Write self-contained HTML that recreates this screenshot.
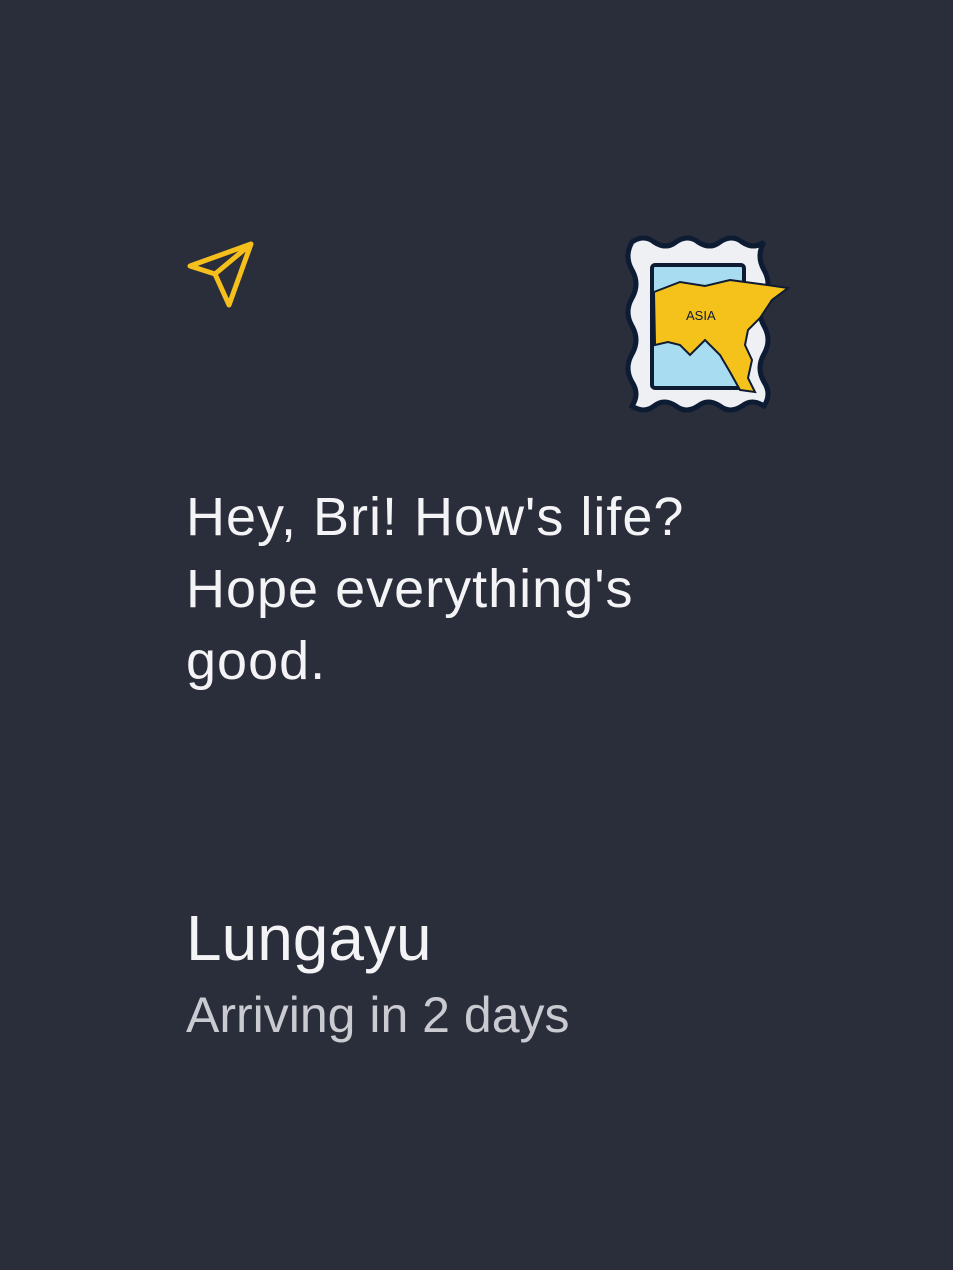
<!DOCTYPE html>
<html><head><style>
body{margin:0;width:953px;height:1270px;background:#2a2d3a;overflow:hidden;position:relative;font-family:"Liberation Sans",sans-serif}
.t{position:absolute;left:186px;color:#f4f4f6;white-space:nowrap}
</style></head><body>
<svg style="position:absolute;left:0;top:0" width="953" height="1270">
<path d="M190 266 L251 244 L229 305 L215 274 Z M251 244 L215 274" fill="none" stroke="#f5bf1c" stroke-width="5" stroke-linejoin="round" stroke-linecap="round"/>
<g>
<path d="M632 242 q12 -8 22 0 q12 8 22 0 q12 -8 22 0 q12 8 22 0 q12 -8 22 0 q12 8 22 0 l0 0 q-8 14 0 28 q8 14 0 28 q-8 14 0 28 q8 14 0 28 q-8 14 0 28 q8 12 0 24 q-12 -8 -22 0 q-12 8 -22 0 q-12 -8 -22 0 q-12 8 -22 0 q-12 -8 -22 0 q-10 8 -22 0 q8 -12 0 -24 q-8 -14 0 -28 q8 -14 0 -28 q-8 -14 0 -28 q8 -14 0 -28 q-8 -14 0 -28 Z" fill="#eef0f4" stroke="#0d1b33" stroke-width="5"/>
<rect x="652" y="265" width="92" height="123" rx="3" fill="#a8dcf0" stroke="#0d1b33" stroke-width="4"/>
<path d="M654 292 L680 282 L705 286 L730 280 L760 284 L788 288 L772 300 L760 318 L748 330 L745 345 L752 360 L748 378 L755 392 L740 390 L730 372 L720 355 L705 340 L690 355 L680 345 L668 342 L655 345 Z" fill="#f5c21b" stroke="#0d1b33" stroke-width="2"/>
<text x="686" y="320" font-size="13" font-family="Liberation Sans" fill="#0d1b33">ASIA</text>
</g>
</svg>
<div class="t" style="top:481px;font-size:54px;line-height:72px;letter-spacing:1px">Hey, Bri! How's life?<br>Hope everything's<br>good.</div>
<div class="t" style="top:900px;font-size:64px;line-height:76px">Lungayu</div>
<div class="t" style="top:986px;font-size:50px;line-height:58px;color:#c9cbd1">Arriving in 2 days</div>
</body></html>
